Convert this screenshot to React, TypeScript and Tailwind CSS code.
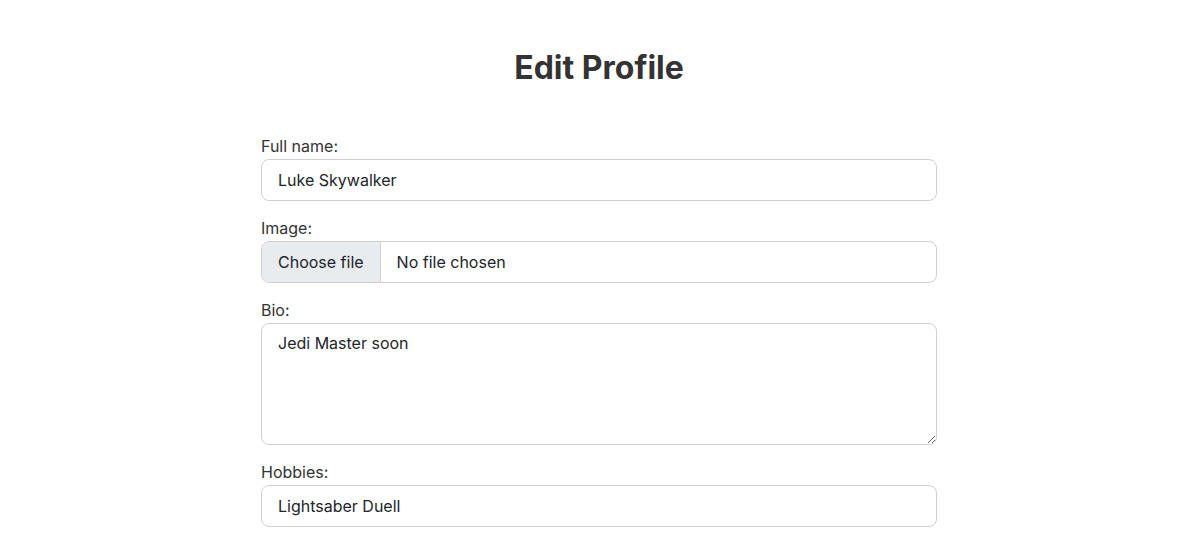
import React from "react";

export default function App() {
  return (
    <div
      className="min-h-[538px] bg-white text-[#333] pl-[5px]"
      style={{ fontFamily: "Inter, 'Noto Sans', sans-serif" }}
    >
      <div className="mx-auto w-[676px] pt-[50px]">
        <h1 className="text-center text-[32px] leading-[36px] font-bold text-[#333]">Edit Profile</h1>
        <form className="mt-[48px] flex flex-col gap-[15px]">
          <div className="flex flex-col">
            <label className="block text-[16px] leading-[24px] mb-px">Full name:</label>
            <input
              type="text"
              readOnly
              defaultValue="Luke Skywalker"
              className="h-[42px] w-full rounded-lg border border-[#d0d0d0] bg-white px-4 text-[16px] text-[#212529] outline-none"
            />
          </div>
          <div className="flex flex-col">
            <label className="block text-[16px] leading-[24px] mb-px">Image:</label>
            <div className="flex h-[42px] w-full overflow-hidden rounded-lg border border-[#d0d0d0] bg-white text-[16px] text-[#212529]">
              <div className="flex items-center bg-[#e9ecef] px-4 border-r border-[#d0d0d0]">Choose file</div>
              <div className="flex items-center px-4">No file chosen</div>
            </div>
          </div>
          <div className="flex flex-col">
            <label className="block text-[16px] leading-[24px] mb-px">Bio:</label>
            <textarea
              readOnly
              defaultValue="Jedi Master soon"
              className="block h-[122px] w-full resize-y rounded-lg border border-[#d0d0d0] bg-white px-4 py-[7px] text-[16px] leading-[24px] text-[#212529] outline-none"
            />
          </div>
          <div className="flex flex-col">
            <label className="block text-[16px] leading-[24px] mb-px">Hobbies:</label>
            <input
              type="text"
              readOnly
              defaultValue="Lightsaber Duell"
              className="h-[42px] w-full rounded-lg border border-[#d0d0d0] bg-white px-4 text-[16px] text-[#212529] outline-none"
            />
          </div>
        </form>
      </div>
    </div>
  );
}
